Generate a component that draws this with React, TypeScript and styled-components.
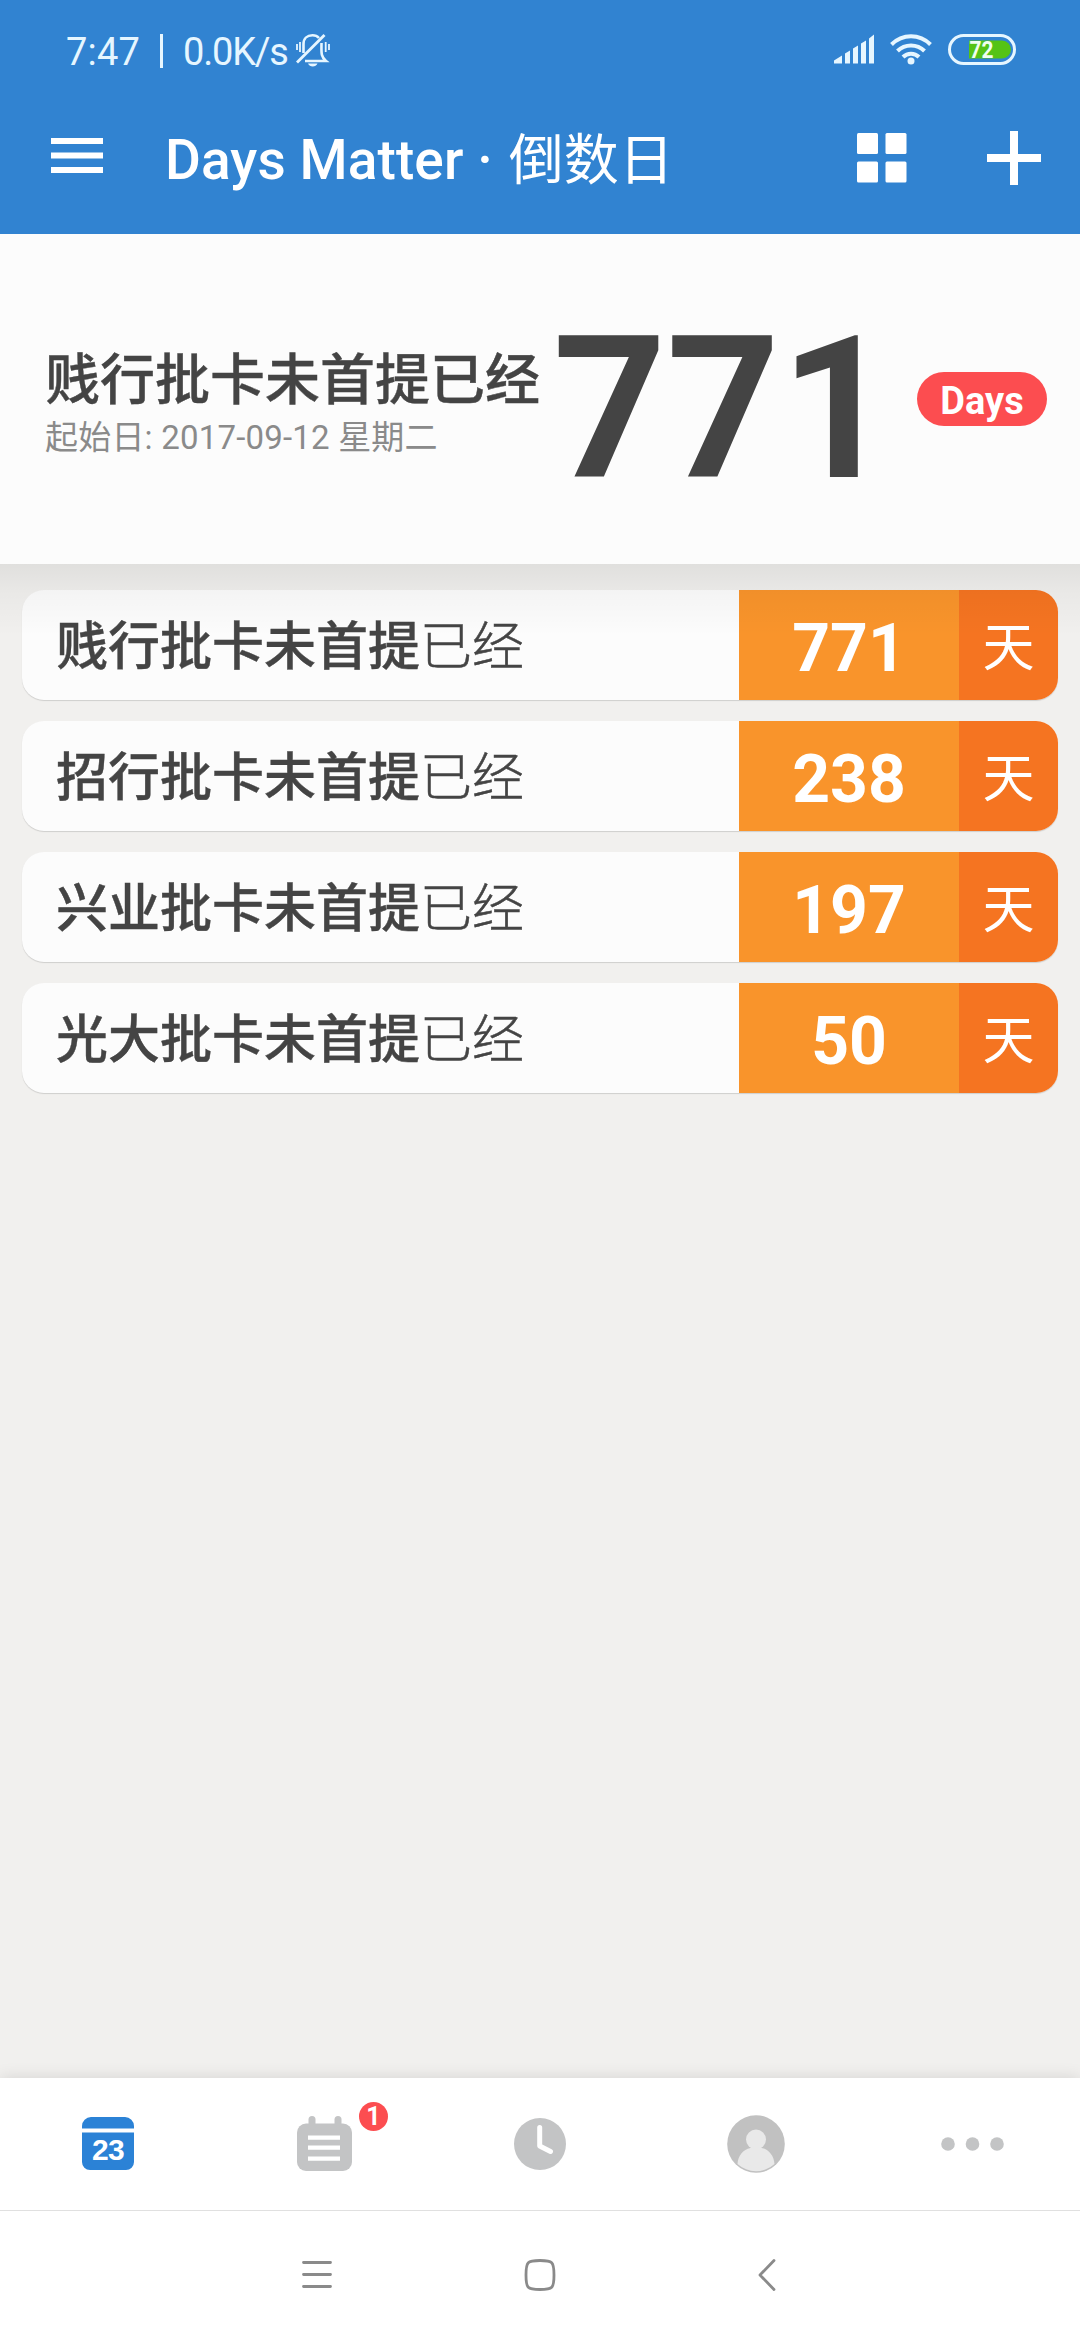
import React, { FunctionComponent } from 'react';

import styled, { createGlobalStyle } from 'styled-components';

const GlobalStyle = createGlobalStyle`
  * {
    box-sizing: border-box;
  }
  body {
    margin: 0;
    font-family: Roboto, 'Noto Sans CJK SC', sans-serif;
  }
  svg {
    display: block;
  }
`;

const Screen = styled.div`
  display: flex;
  flex-direction: column;
  width: 1080px;
  height: 2340px;
  overflow: hidden;
  background: #f1f0ee;
`;

const Header = styled.header`
  height: 234px;
  background: #3183d1;
  color: white;
`;

const StatusBar = styled.div`
  display: flex;
  align-items: center;
  height: 98px;
  padding: 0 64px 0 66px;
`;

const StatusText = styled.span<{ $tight?: boolean }>`
  font-size: 38px;
  line-height: 44px;
  letter-spacing: ${(props) => (props.$tight ? '-1.2px' : '0.2px')};
  color: #e6f6ff;
  white-space: pre;
  margin-top: 5px;
`;

const Divider = styled.span`
  width: 3px;
  height: 34px;
  margin: 4px 20px 0 20px;
  background: #e6f6ff;
`;

const BellSlot = styled.div`
  flex: 1;
  padding: 2px 0 0 8px;
`;

const StatusIcons = styled.div`
  display: flex;
  align-items: center;
  gap: 16px;
`;

const AppBar = styled.div`
  display: flex;
  align-items: center;
  height: 120px;
  padding: 0 39px 0 51px;
`;

const MenuButton = styled.div`
  padding-bottom: 4px;
`;

const AppTitle = styled.h1`
  flex: 1;
  margin: 4px 0 0 62px;
  font-size: 55px;
  line-height: 64px;
  font-weight: 500;
  letter-spacing: 0.1px;
  white-space: pre;
`;

const TitleSuffix = styled.span`
  margin-left: 2px;
  font-weight: 400;
  letter-spacing: 0;
`;

const AppActions = styled.div`
  display: flex;
  align-items: center;
  gap: 80px;
`;

const Hero = styled.section`
  position: relative;
  z-index: 1;
  display: flex;
  height: 330px;
  padding-left: 45px;
  background: #fcfcfc;
  &::after {
    content: '';
    position: absolute;
    top: 100%;
    left: 0;
    width: 100%;
    height: 72px;
    background: linear-gradient(rgba(0, 0, 0, 0.07), rgba(0, 0, 0, 0.03) 40%, transparent);
  }
`;

const HeroLabels = styled.div`
  display: flex;
  flex-direction: column;
  width: 508px;
  padding-top: 114px;
`;

const HeroTitle = styled.div`
  font-size: 55px;
  line-height: 64px;
  font-weight: 500;
  color: #444444;
  white-space: nowrap;
  -webkit-text-stroke: 0.4px #444444;
`;

const HeroDate = styled.div`
  font-size: 33px;
  line-height: 40px;
  letter-spacing: 0.2px;
  margin-top: 6px;
  color: #8a8a8a;
  white-space: nowrap;
`;

const HeroCount = styled.div`
  width: 364px;
  padding-top: 59px;
  font-size: 198px;
  line-height: 232px;
  font-weight: 700;
  color: #444444;
`;

const DaysPill = styled.div`
  display: flex;
  align-items: center;
  justify-content: center;
  width: 130px;
  height: 54px;
  margin-top: 138px;
  padding-top: 4px;
  border-radius: 27px;
  background: #fc4d50;
  color: white;
  font-size: 38px;
  font-weight: 700;
`;

const EventList = styled.main`
  display: flex;
  flex-direction: column;
  flex: 1;
  gap: 21px;
  padding: 26px 22px 0 22px;
`;

const EventCard = styled.div`
  display: flex;
  height: 110px;
  border-radius: 22px;
  background: #fcfcfc;
  overflow: hidden;
  box-shadow: 0 1px 1px rgba(0, 0, 0, 0.14);
`;

const EventName = styled.div`
  flex: 1;
  padding: 3px 0 0 34px;
  font-size: 52px;
  line-height: 110px;
  font-weight: 300;
  color: #444444;
  white-space: nowrap;
  -webkit-text-stroke: 0.5px #444444;
`;

const EventTitle = styled.span`
  font-weight: 500;
  -webkit-text-stroke: 0.4px #444444;
`;

const EventCount = styled.div`
  width: 220px;
  padding-top: 4px;
  background: #f9942b;
  color: white;
  font-size: 66px;
  line-height: 110px;
  font-weight: 700;
  text-align: center;
`;

const EventUnit = styled.div`
  width: 99px;
  background: #f57421;
  color: white;
  font-size: 52px;
  line-height: 117px;
  text-align: center;
`;

const TabBar = styled.nav`
  display: flex;
  height: 133px;
  padding-bottom: 1px;
  background: white;
  border-bottom: 1px solid #e0e0e0;
  box-shadow: 0 0 16px rgba(0, 0, 0, 0.12);
`;

const Tab = styled.div`
  position: relative;
  display: flex;
  flex: 1;
  align-items: center;
  justify-content: center;
`;

const Badge = styled.span`
  position: absolute;
  top: 24px;
  left: 143px;
  width: 29px;
  height: 29px;
  border-radius: 50%;
  background: #fc4d50;
  color: white;
  font-size: 25px;
  line-height: 30px;
  text-align: center;
  font-weight: 700;
`;

const SystemNav = styled.div`
  display: flex;
  align-items: center;
  gap: 192px;
  height: 129px;
  padding: 0 0 2px 302px;
  background: white;
`;

const BackButton = styled.div`
  margin-left: 10px;
`;

interface DayEvent {
  title: string;
  days: number;
}

const events: Array<DayEvent> = [
  { title: '贱行批卡未首提', days: 771 },
  { title: '招行批卡未首提', days: 238 },
  { title: '兴业批卡未首提', days: 197 },
  { title: '光大批卡未首提', days: 50 },
];

const BellOffIcon = () => (
  <svg width="35" height="33" viewBox="0 0 35 33" fill="none" stroke="#e6f6ff" strokeWidth="2.6">
    <path d="M7.5 19v-9c0-5.5 3.5-8.7 9-8.7 3 0 5 1 6.5 2.7M25.5 9c0 9-1 13.5 4.5 18H9" />
    <path d="M1 28.5L28.5 1" strokeWidth="2.8" />
    <path d="M1 10v6M4 8v10M29.7 8v10M33 10v6" strokeWidth="1.8" />
    <path d="M12 29.5h9.5c-1.5 4-8 4-9.5 0z" fill="#e6f6ff" stroke="none" />
  </svg>
);

const SignalIcon = () => (
  <svg width="40" height="30" viewBox="0 0 40 30" fill="#e6f6ff">
    <path d="M0 29.5v-3l8-5v8zM11 29.5V19.5l5-3v13zM19 29.5v-15l5-3v18zM27 29.5V9.5l5-3v23zM35 29.5v-25l5-4v29z" />
  </svg>
);

const WifiIcon = () => (
  <svg width="42" height="31" viewBox="0 0 42 31" fill="none" stroke="#e6f6ff" strokeWidth="4">
    <path d="M1.5 10.5C12.5 -0.5 29.5 -0.5 40.5 10.5" />
    <path d="M7.5 17C15 9.5 27 9.5 34.5 17" />
    <path d="M13 23C17.5 18.5 24.5 18.5 29 23" />
    <circle cx="21" cy="27" r="3.5" fill="#e6f6ff" stroke="none" />
  </svg>
);

const BatteryIcon = () => (
  <svg width="68" height="31" viewBox="0 0 68 31">
    <rect x="1.5" y="1.5" width="65" height="28" rx="14" fill="none" stroke="#e6f6ff" strokeWidth="3" />
    <path d="M21 6.5h33a9 9 0 0 1 0 18H21z" fill="#55c316" />
    <text x="21.5" y="24" fontSize="24" fontWeight="700" fill="#f0fff0" textLength="24" lengthAdjust="spacingAndGlyphs">
      72
    </text>
  </svg>
);

const MenuIcon = () => (
  <svg width="52" height="36" viewBox="0 0 52 36" fill="white">
    <path d="M0 0h52v6H0zM0 14.5h52v6H0zM0 29h52v6H0z" />
  </svg>
);

const GridIcon = () => (
  <svg width="50" height="50" viewBox="0 0 50 50" fill="white">
    <rect width="21" height="21" rx="1.5" />
    <rect x="28.5" width="21" height="21" rx="1.5" />
    <rect y="28.5" width="21" height="21" rx="1.5" />
    <rect x="28.5" y="28.5" width="21" height="21" rx="1.5" />
  </svg>
);

const PlusIcon = () => (
  <svg width="54" height="54" viewBox="0 0 54 54" fill="white">
    <path d="M23 0h8v23h23v8H31v23h-8V31H0v-8h23z" />
  </svg>
);

const CalendarIcon = () => (
  <svg width="52" height="53" viewBox="0 0 52 53" fill="#2b82d6">
    <path d="M0 11.5V9a9 9 0 0 1 9-9h34a9 9 0 0 1 9 9v2.5zM0 15.5h52V45a8 8 0 0 1-8 8H8a8 8 0 0 1-8-8z" />
    <text x="26" y="42.5" fontFamily="Liberation Sans" fontSize="30" fontWeight="700" letterSpacing="-0.8" textAnchor="middle" fill="white">
      23
    </text>
  </svg>
);

const NoteIcon = () => (
  <svg width="55" height="55" viewBox="0 0 55 55" fill="#c3c4c5">
    <rect y="7.5" width="55" height="47.5" rx="9" />
    <rect x="11.5" width="7" height="14" rx="3.5" />
    <rect x="37.5" width="7" height="14" rx="3.5" />
    <path d="M11 19.5h32v4.2H11zM11 29.5h32v4.2H11zM11 40.5h32v4.2H11z" fill="white" />
  </svg>
);

const ClockIcon = () => (
  <svg width="52" height="52" viewBox="0 0 52 52">
    <circle cx="26" cy="26" r="26" fill="#c3c4c5" />
    <path d="M25.7 9.5V28L36.5 33.5" fill="none" stroke="white" strokeWidth="5" strokeLinecap="round" strokeLinejoin="round" />
  </svg>
);

const AvatarIcon = () => (
  <svg width="58" height="58" viewBox="0 0 58 58">
    <circle cx="29" cy="29" r="28.8" fill="#c1c1c1" />
    <circle cx="29" cy="24.5" r="10" fill="#e9e9e9" />
    <path d="M10.5 49C11 41 16 34.5 23.5 33q1.5-.5.5-2h10q-1 1.5.5 2C42 34.5 47 41 47.5 49A27.5 27.5 0 0 1 10.5 49z" fill="#e9e9e9" />
  </svg>
);

const MoreIcon = () => (
  <svg width="63" height="14" viewBox="0 0 63 14" fill="#c3c4c5">
    <circle cx="7" cy="7" r="6.8" />
    <circle cx="31.5" cy="7" r="6.8" />
    <circle cx="56" cy="7" r="6.8" />
  </svg>
);

const RecentsIcon = () => (
  <svg width="30" height="30" viewBox="0 0 30 30" stroke="#8a8a8a" strokeWidth="2.8" strokeLinecap="round">
    <path d="M1.5 2.5h27M1.5 14.5h27M1.5 26.5h27" />
  </svg>
);

const HomeIcon = () => (
  <svg width="32" height="32" viewBox="0 0 32 32" fill="none" stroke="#8a8a8a" strokeWidth="2.8">
    <path d="M16 1.5c12.5 0 14 1 14 14.5s-1.5 14.5-14 14.5S2 29.5 2 16 3.500 1.5 16 1.5z" />
  </svg>
);

const BackIcon = () => (
  <svg width="18" height="32" viewBox="0 0 18 32" fill="none" stroke="#8a8a8a" strokeWidth="2.8" strokeLinecap="round" strokeLinejoin="round">
    <path d="M16 1.5L2 16L16 30.5" />
  </svg>
);

const App: FunctionComponent = () => (
  <Screen>
    <GlobalStyle />
    <Header>
      <StatusBar>
        <StatusText>7:47</StatusText>
        <Divider />
        <StatusText $tight>0.0K/s</StatusText>
        <BellSlot>
          <BellOffIcon />
        </BellSlot>
        <StatusIcons>
          <SignalIcon />
          <WifiIcon />
          <BatteryIcon />
        </StatusIcons>
      </StatusBar>
      <AppBar>
        <MenuButton>
          <MenuIcon />
        </MenuButton>
        <AppTitle>
          Days Matter · <TitleSuffix>倒数日</TitleSuffix>
        </AppTitle>
        <AppActions>
          <GridIcon />
          <PlusIcon />
        </AppActions>
      </AppBar>
    </Header>

    <Hero>
      <HeroLabels>
        <HeroTitle>贱行批卡未首提已经</HeroTitle>
        <HeroDate>起始日: 2017-09-12 星期二</HeroDate>
      </HeroLabels>
      <HeroCount>771</HeroCount>
      <DaysPill>Days</DaysPill>
    </Hero>

    <EventList>
      {events.map((ev: DayEvent) => (
        <EventCard key={ev.title}>
          <EventName>
            <EventTitle>{ev.title}</EventTitle>已经
          </EventName>
          <EventCount>{ev.days}</EventCount>
          <EventUnit>天</EventUnit>
        </EventCard>
      ))}
    </EventList>

    <TabBar>
      <Tab>
        <CalendarIcon />
      </Tab>
      <Tab>
        <NoteIcon />
        <Badge>1</Badge>
      </Tab>
      <Tab>
        <ClockIcon />
      </Tab>
      <Tab>
        <AvatarIcon />
      </Tab>
      <Tab>
        <MoreIcon />
      </Tab>
    </TabBar>
    <SystemNav>
      <RecentsIcon />
      <HomeIcon />
      <BackButton>
        <BackIcon />
      </BackButton>
    </SystemNav>
  </Screen>
);

export default App;
